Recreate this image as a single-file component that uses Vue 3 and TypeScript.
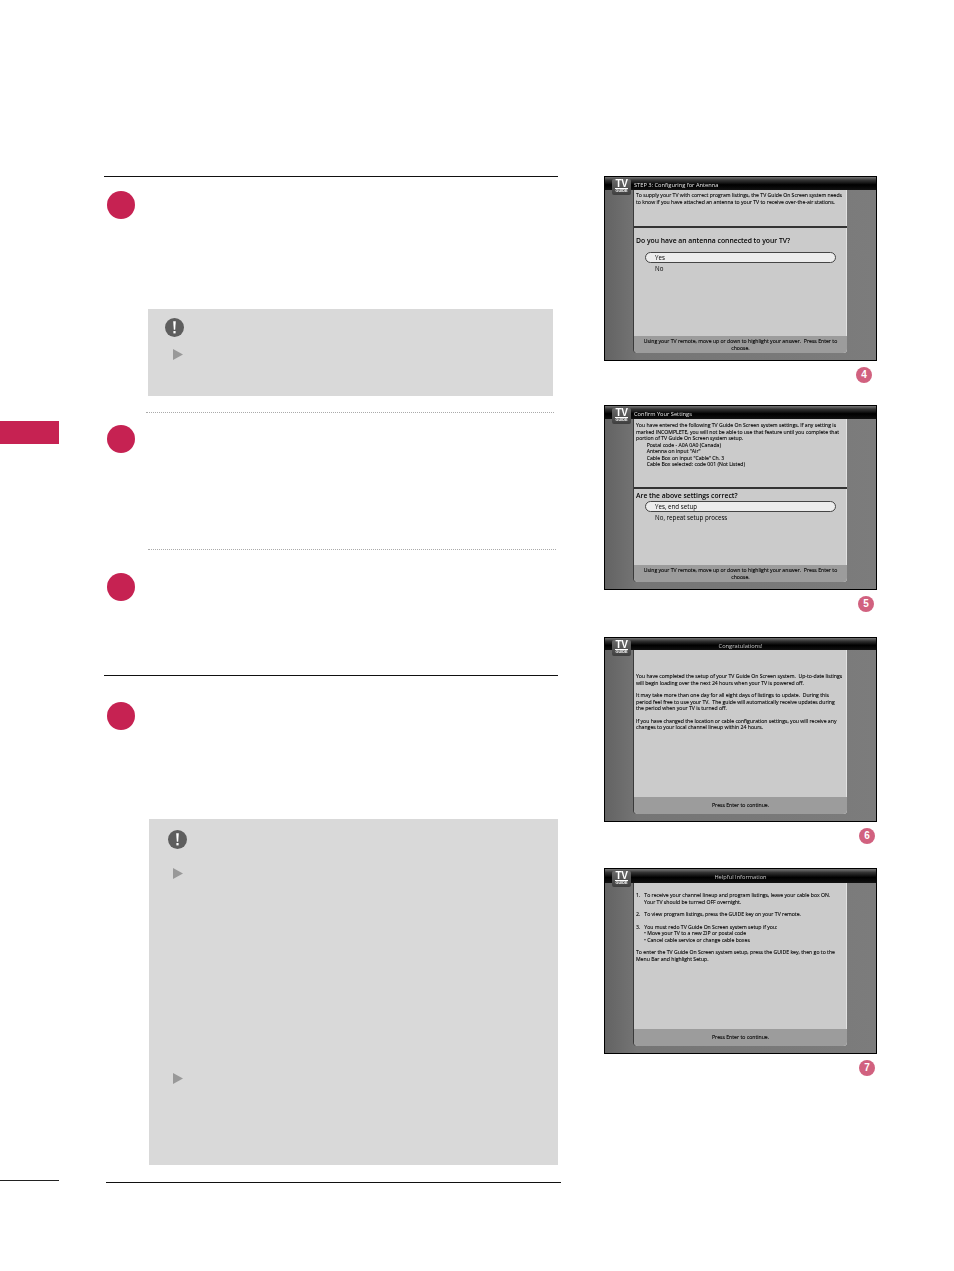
<script setup lang="ts">
interface Screen {
  title: string
  centered?: boolean
  height: number
  panelTop: number
  panelHeight: number
  bodyTop: number
  intro: string[]
  introHeight?: number
  question?: string
  questionTop?: number
  questionHeight?: number
  options?: string[]
  footer: string
  badge: string
  badgeRight: number
  gap: number
}

const answerHint =
  'Using your TV remote, move up or down to highlight your answer.  Press Enter to\nchoose.'

const screens: Screen[] = [
  {
    title: 'STEP 3: Configuring for Antenna',
    height: 185,
    panelTop: 13,
    panelHeight: 163,
    bodyTop: 2,
    intro: [
      'To supply your TV with correct program listings, the TV Guide On Screen system needs\nto know if you have attached an antenna to your TV to receive over-the-air stations.',
    ],
    introHeight: 38,
    question: 'Do you have an antenna connected to your TV?',
    questionTop: 8,
    questionHeight: 16,
    options: ['Yes', 'No'],
    footer: answerHint,
    badge: '4',
    badgeRight: 6,
    gap: 2,
  },
  {
    title: 'Confirm Your Settings',
    height: 185,
    panelTop: 13,
    panelHeight: 163,
    bodyTop: 3,
    intro: [
      'You have entered the following TV Guide On Screen system settings. If any setting is\nmarked INCOMPLETE, you will not be able to use that feature until you complete that\nportion of TV Guide On Screen system setup.\n        Postal code - A0A 0A0 (Canada)\n        Antenna on input "Air"\n        Cable Box on input "Cable" Ch. 3\n        Cable Box selected: code 001 (Not Listed)',
    ],
    introHeight: 70,
    question: 'Are the above settings correct?',
    questionTop: 2,
    questionHeight: 10,
    options: ['Yes, end setup', 'No, repeat setup process'],
    footer: answerHint,
    badge: '5',
    badgeRight: 4,
    gap: 5,
  },
  {
    title: 'Congratulations!',
    centered: true,
    height: 185,
    panelTop: 12,
    panelHeight: 164,
    bodyTop: 23,
    intro: [
      'You have completed the setup of your TV Guide On Screen system.  Up-to-date listings\nwill begin loading over the next 24 hours when your TV is powered off.',
      'It may take more than one day for all eight days of listings to update.  During this\nperiod feel free to use your TV.  The guide will automatically receive updates during\nthe period when your TV is turned off.',
      'If you have changed the location or cable configuration settings, you will receive any\nchanges to your local channel lineup within 24 hours.',
    ],
    footer: 'Press Enter to continue.',
    badge: '6',
    badgeRight: 3,
    gap: 4,
  },
  {
    title: 'Helpful Information',
    centered: true,
    height: 186,
    panelTop: 14,
    panelHeight: 163,
    bodyTop: 9,
    intro: [
      '1.   To receive your channel lineup and program listings, leave your cable box ON.\n      Your TV should be turned OFF overnight.',
      '2.   To view program listings, press the GUIDE key on your TV remote.',
      '3.   You must redo TV Guide On Screen system setup if you:\n      • Move your TV to a new ZIP or postal code\n      • Cancel cable service or change cable boxes',
      'To enter the TV Guide On Screen system setup, press the GUIDE key, then go to the\nMenu Bar and highlight Setup.',
    ],
    footer: 'Press Enter to continue.',
    badge: '7',
    badgeRight: 3,
    gap: 0,
  },
]
</script>

<template>
  <div class="page">
    <aside class="side">
      <div class="side-tab"></div>
      <div class="side-rule"></div>
    </aside>

    <main class="steps">
      <div class="rule"></div>
      <div class="dot dot-1"></div>
      <div class="note note-1">
        <svg class="alert" viewBox="0 0 19 19">
          <circle cx="9.5" cy="9.5" r="9.5" fill="#5e5e5e" />
          <path d="M8.2 3.2h2.6l-.6 8.6H8.8z" fill="#fff" />
          <rect x="8.4" y="13" width="2.2" height="2.4" fill="#fff" />
        </svg>
        <svg class="arrow arrow-1" viewBox="0 0 10 11"><path d="M0 0l10 5.5L0 11z" fill="#999" /></svg>
      </div>
      <div class="dotted dotted-1"></div>
      <div class="dot dot-2"></div>
      <div class="dotted dotted-2"></div>
      <div class="dot dot-3"></div>
      <div class="rule rule-2"></div>
      <div class="dot dot-4"></div>
      <div class="note note-2">
        <svg class="alert" viewBox="0 0 19 19">
          <circle cx="9.5" cy="9.5" r="9.5" fill="#5e5e5e" />
          <path d="M8.2 3.2h2.6l-.6 8.6H8.8z" fill="#fff" />
          <rect x="8.4" y="13" width="2.2" height="2.4" fill="#fff" />
        </svg>
        <svg class="arrow arrow-2" viewBox="0 0 10 11"><path d="M0 0l10 5.5L0 11z" fill="#999" /></svg>
        <svg class="arrow arrow-3" viewBox="0 0 10 11"><path d="M0 0l10 5.5L0 11z" fill="#999" /></svg>
      </div>
      <div class="rule rule-3"></div>
    </main>

    <section class="shots">
      <div v-for="s in screens" :key="s.badge" class="shot" :style="{ marginBottom: s.gap + 'px' }">
        <div class="screen" :style="{ height: s.height + 'px' }">
          <div class="logo">
            <span class="logo-tv">TV</span>
            <span class="logo-guide">GUIDE</span>
          </div>
          <div class="bar" :class="{ centered: s.centered }" :style="{ height: s.panelTop + 'px' }">
            {{ s.title }}
          </div>
          <div class="panel" :style="{ marginTop: s.panelTop + 'px', height: s.panelHeight + 'px' }">
            <div class="panel-body">
              <div class="intro" :class="{ split: s.question }" :style="{ paddingTop: s.bodyTop + 'px', height: s.introHeight ? s.introHeight + 'px' : 'auto' }">
                <p v-for="(para, i) in s.intro" :key="i">{{ para }}</p>
              </div>
              <div v-if="s.question" class="question" :style="{ marginTop: s.questionTop + 'px', height: s.questionHeight + 'px' }">{{ s.question }}</div>
              <div v-for="(opt, i) in s.options" :key="opt" class="option" :class="{ active: i === 0 }">{{ opt }}</div>
            </div>
            <div class="panel-foot"><span>{{ s.footer }}</span></div>
          </div>
        </div>
        <div class="badge-row" :style="{ paddingRight: s.badgeRight + 'px' }">
          <span class="badge">{{ s.badge }}</span>
        </div>
      </div>
    </section>
  </div>
</template>

<style>
html,
body {
  margin: 0;
  background: #fff;
}
</style>

<style scoped>
.page {
  display: flex;
  width: 954px;
  height: 1271px;
  overflow: hidden;
  background: #fff;
  font-family: "Open Sans", "Liberation Sans", sans-serif;
}

.side {
  flex: none;
  display: flex;
  flex-direction: column;
  width: 59px;
  padding-top: 421px;
  box-sizing: border-box;
}

.side-tab {
  height: 23px;
  background: #c62252;
}

.side-rule {
  height: 1px;
  margin-top: 736px;
  background: #222;
}

.steps {
  flex: none;
  width: 457px;
  margin-left: 45px;
  padding-top: 176px;
  box-sizing: border-box;
}

.rule {
  width: 454px;
  height: 1px;
  background: #111;
}

.rule-3 {
  width: 455px;
  margin: 17px 0 0 2px;
}

.dot {
  width: 28px;
  height: 28px;
  margin-left: 3px;
  border-radius: 50%;
  background: #c62252;
}

.dot-1 { margin-top: 14px; }
.dot-2 { margin-top: 12px; }
.dot-3 { margin-top: 23px; }
.dot-4 { margin-top: 26px; }
.rule-2 { margin-top: 74px; }

.note {
  box-sizing: border-box;
  background: #d9d9d9;
}

.note-1 {
  width: 405px;
  height: 87px;
  margin: 90px 0 0 44px;
  padding: 9px 0 0 17px;
}

.note-2 {
  width: 409px;
  height: 346px;
  margin: 89px 0 0 45px;
  padding: 11px 0 0 19px;
}

.alert {
  display: block;
  width: 19px;
  height: 19px;
}

.arrow {
  display: block;
  width: 10px;
  height: 11px;
}

.arrow-1 { margin: 12px 0 0 8px; }
.arrow-2 { margin: 19px 0 0 5px; }
.arrow-3 { margin: 194px 0 0 5px; }

.dotted {
  height: 0;
  border-top: 1px dotted #aaa;
}

.dotted-1 {
  width: 408px;
  margin: 16px 0 0 42px;
}

.dotted-2 {
  width: 408px;
  margin: 96px 0 0 44px;
}

.shots {
  flex: none;
  width: 274px;
  margin-left: 43px;
  padding-top: 176px;
}

.screen {
  position: relative;
  box-sizing: border-box;
  width: 273px;
  overflow: hidden;
  border: 1px solid #000;
  background: linear-gradient(90deg, #636363, #757575 12%, #7c7c7c);
  filter: blur(0.3px);
}

.logo {
  position: absolute;
  top: 2px;
  left: 7px;
  z-index: 2;
  display: flex;
  flex-direction: column;
  align-items: center;
  width: 19px;
  height: 16px;
  border-radius: 2px;
  background: linear-gradient(#6a6a6a, #3f3f3f);
  color: #fff;
  font-family: "Liberation Sans", sans-serif;
  font-weight: 700;
}

.logo-tv {
  font-size: 10px;
  line-height: 9px;
  letter-spacing: -0.3px;
  border-bottom: 1px solid #fff;
}

.logo-guide {
  font-size: 3.8px;
  line-height: 5px;
}

.bar {
  position: absolute;
  top: 0;
  left: 0;
  right: 0;
  z-index: 1;
  box-sizing: border-box;
  padding: 4px 0 0 29px;
  background: linear-gradient(#777 0, #333 25%, #000 60%, #111 100%);
  color: #e8e8e8;
  font-size: 5.7px;
  line-height: 9px;
}

.bar.centered {
  padding-left: 0;
  text-align: center;
  color: #ccc;
}

.panel {
  position: relative;
  display: flex;
  flex-direction: column;
  box-sizing: border-box;
  width: 213px;
  margin-left: 29px;
  border-radius: 0 0 4px 4px;
  background: #cbcbcb;
  box-shadow: -1px 0 0 #3a3a3a, inset -1px 0 0 #e2e2e2;
  color: #000;
}

.panel-body {
  flex: 1;
  min-height: 0;
}

.intro {
  box-sizing: border-box;
  padding: 0 2px;
  font-size: 5.15px;
  line-height: 6.5px;
  white-space: pre;
  -webkit-text-stroke: 0.1px #000;
}

.intro.split {
  border-bottom: 2px solid #333;
}

.intro p {
  margin: 0 0 6px;
}

.question {
  padding-left: 2px;
  font-size: 6.8px;
  line-height: 9px;
  font-weight: 600;
}

.option {
  box-sizing: border-box;
  width: 191px;
  height: 11px;
  margin-left: 11px;
  padding-left: 10px;
  font-size: 6.2px;
  line-height: 11px;
}

.option.active {
  border: 1px solid #444;
  border-radius: 6px;
  padding-left: 9px;
  line-height: 9px;
  background: #ececec;
}

.panel-foot {
  flex: none;
  display: flex;
  align-items: center;
  justify-content: center;
  height: 17px;
  box-sizing: border-box;
  border-radius: 0 0 4px 4px;
  background: #9c9c9c;
  font-size: 5.15px;
  line-height: 6.5px;
  text-align: center;
  white-space: pre;
  -webkit-text-stroke: 0.1px #000;
}

.badge-row {
  display: flex;
  justify-content: flex-end;
  height: 42px;
  padding-top: 6px;
  box-sizing: border-box;
}

.badge {
  width: 16px;
  height: 16px;
  border-radius: 50%;
  background: #d1617f;
  color: #fff;
  font-family: "Liberation Sans", sans-serif;
  font-size: 10px;
  font-weight: 700;
  line-height: 16px;
  text-align: center;
}
</style>
